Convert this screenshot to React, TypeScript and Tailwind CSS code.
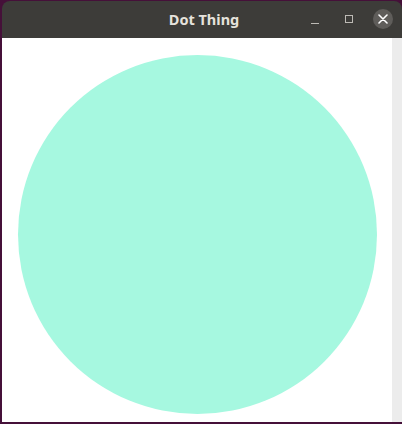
const App: React.FC = () => {
  return (
    <div
      className="w-[402px] h-[424px] bg-[#451039] pl-[2px] pt-[1px] pb-[2px] flex flex-col overflow-hidden"
      style={{ fontFamily: '"Noto Sans", "DejaVu Sans", sans-serif' }}
    >
      {/* Title bar */}
      <div className="relative h-[37px] shrink-0 bg-[#3d3c39] rounded-t-[8px] flex items-center justify-center">
        <span className="text-[14.5px] font-bold text-[#e6e2dc] ml-[4px]">Dot Thing</span>

        {/* Window controls */}
        <div className="absolute right-[9px] top-0 h-full flex items-center gap-[14px]">
          <div className="w-[20px] h-[20px] flex items-center justify-center ml-[2px]">
            <div className="w-[8px] h-[1px] bg-[#bdbab5] mt-[8px]" />
          </div>
          <div className="w-[20px] h-[20px] flex items-center justify-center">
            <div className="w-[8px] h-[8px] border border-[#bdbab5] -mt-[2px]" />
          </div>
          <div className="w-[20px] h-[20px] rounded-full bg-[#5f5d5a] flex items-center justify-center -mt-[1px]">
            <svg width="10" height="10" viewBox="0 0 10 10">
              <path d="M1 1L9 9M9 1L1 9" stroke="#ffffff" strokeWidth="1.6" strokeLinecap="round" />
            </svg>
          </div>
        </div>
      </div>

      {/* Content */}
      <div className="flex flex-1 min-h-0">
        <div className="w-[390px] bg-white pl-[16px] pt-[17px]">
          <div className="w-[359px] h-[359px] rounded-full bg-[#a6f8e0]" />
        </div>
        <div className="flex-1 bg-[#ececec]" />
      </div>
    </div>
  );
};

export default App;
